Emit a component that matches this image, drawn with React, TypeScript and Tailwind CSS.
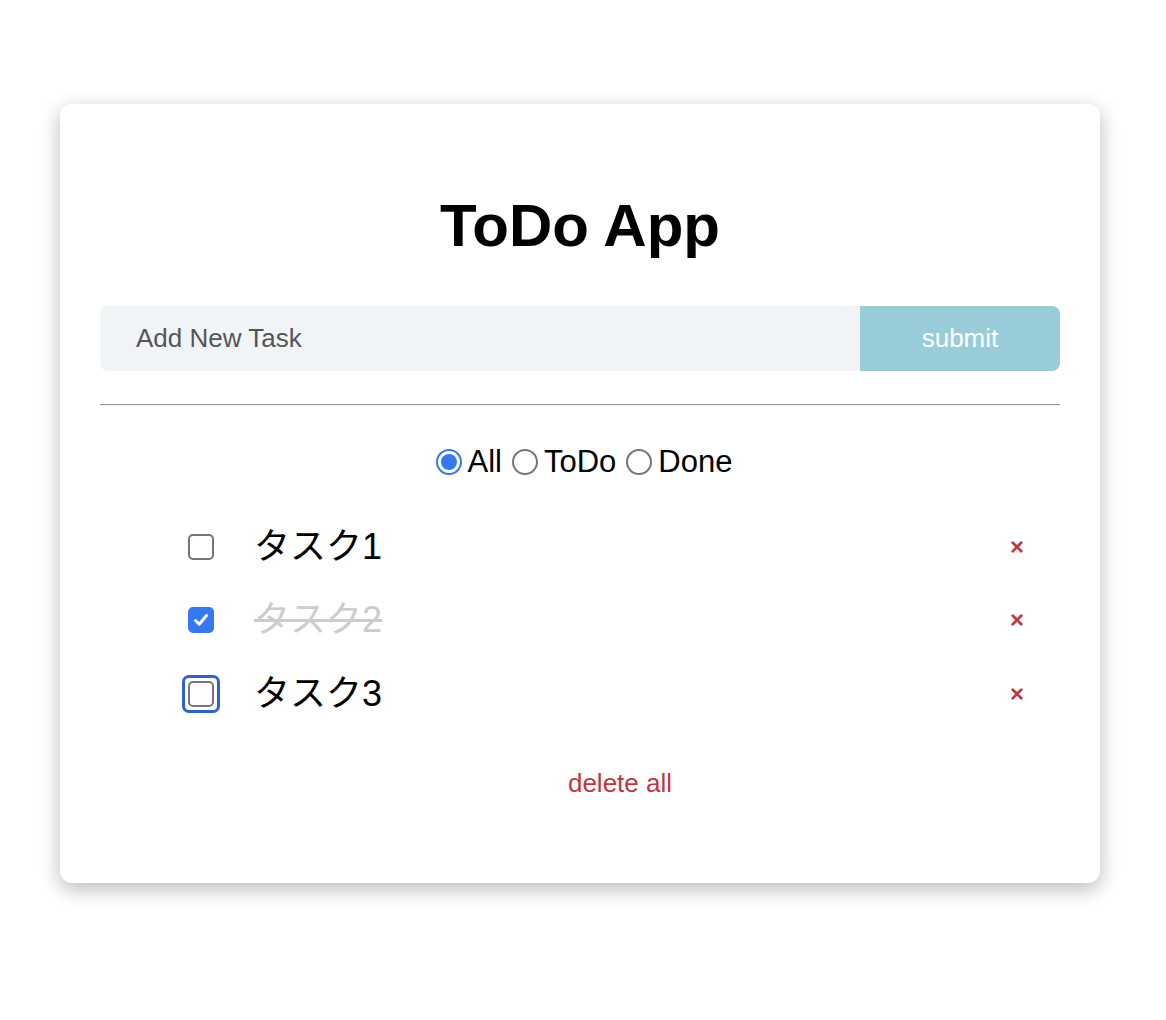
import React from "react";

const font = { fontFamily: '"Liberation Sans", Arial, "Noto Sans CJK JP", sans-serif' };

function Radio({ checked, label }: { checked?: boolean; label: string }) {
  return (
    <label className="flex items-center gap-[6px]">
      {checked ? (
        <span className="w-[26px] h-[26px] rounded-full border-2 border-[#3478f6] flex items-center justify-center bg-white">
          <span className="w-[16px] h-[16px] rounded-full bg-[#3478f6]" />
        </span>
      ) : (
        <span className="w-[26px] h-[26px] rounded-full border-2 border-[#767676] bg-white" />
      )}
      <span className="text-[31px] text-black leading-none">{label}</span>
    </label>
  );
}

function Box({ checked, focused }: { checked?: boolean; focused?: boolean }) {
  const inner = checked ? (
    <span className="w-[26px] h-[26px] rounded-[5px] bg-[#3478f6] flex items-center justify-center">
      <svg width="18" height="18" viewBox="0 0 18 18">
        <path d="M3.5 9.5 L7.2 13.2 L14.5 4.5" fill="none" stroke="white" strokeWidth="3" strokeLinecap="round" strokeLinejoin="round" />
      </svg>
    </span>
  ) : (
    <span className="w-[26px] h-[26px] rounded-[5px] border-2 border-[#767676] bg-white block" />
  );
  if (focused) {
    return (
      <span className="w-[38px] h-[38px] -m-[6px] rounded-[7px] border-[3px] border-[#2d62d4] flex items-center justify-center">
        {inner}
      </span>
    );
  }
  return inner;
}

function Task({ text, done, focused }: { text: string; done?: boolean; focused?: boolean }) {
  return (
    <li className="h-[73.5px] flex items-center justify-between pl-[8px] pr-[36px]">
      <div className="flex items-center gap-[40px]">
        <Box checked={done} focused={focused} />
        <span
          className={
            "text-[36px] leading-none " + (done ? "text-[#cccccc] line-through" : "text-black")
          }
        >
          {text}
        </span>
      </div>
      <span className="text-[24px] font-bold text-[#c1373f] leading-none">×</span>
    </li>
  );
}

export default function App() {
  return (
    <div className="min-h-[1020px] bg-white px-[60px] pt-[104px]" style={font}>
      <div className="w-[1040px] h-[779px] bg-white rounded-[12px] shadow-[0_6px_20px_rgba(0,0,0,0.28)] px-[40px] pt-[88px]">
        <h1 className="text-[60px] font-bold text-black text-center leading-[67px]">ToDo App</h1>
        <div className="mt-[47px] flex h-[65px]">
          <div className="flex-1 bg-[#f0f4f7] rounded-l-[8px] flex items-center pl-[36px]">
            <span className="text-[26px] text-[#555555]">Add New Task</span>
          </div>
          <div className="w-[200px] bg-[#99ccd9] rounded-r-[8px] flex items-center justify-center">
            <span className="text-[26px] text-white">submit</span>
          </div>
        </div>
        <div className="mt-[33px] h-0 border-t border-b border-t-[#9a9a9a] border-b-[#eeeeee]" />
        <div className="mt-[40px] flex justify-center gap-[10px] pl-[8px]">
          <Radio checked label="All" />
          <Radio label="ToDo" />
          <Radio label="Done" />
        </div>
        <ul className="pl-[80px] mt-[33px]">
          <Task text="タスク1" />
          <Task text="タスク2" done />
          <Task text="タスク3" focused />
        </ul>
        <div className="pl-[80px] mt-[33px] text-center">
          <span className="text-[26px] text-[#c1373f]">delete all</span>
        </div>
      </div>
    </div>
  );
}
